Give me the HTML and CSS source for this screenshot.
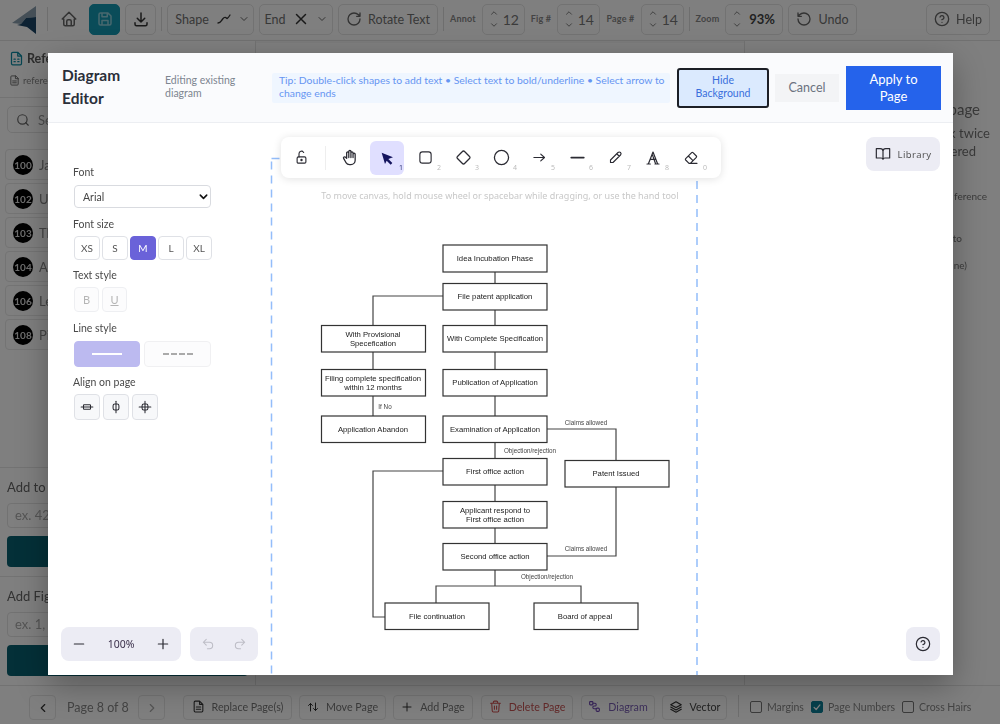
FILE: index.html
```html
<!DOCTYPE html>
<html lang="en">
<head>
<meta charset="utf-8">
<title>Diagram Editor</title>
<link rel="stylesheet" href="styles.css">
</head>
<body>
<div class="app">
  <header class="topbar">
    <svg class="logo" viewBox="0 0 25 28"><polygon class="logo-top" points="24,0 24,11 14,12 9,18 0,17"/><polygon class="logo-low" points="24,11 24,28 15,21 5,19 9,18 14,12"/></svg>
    <span class="sep sep-logo"></span>
    <button class="tb plain b-icon"><svg class="ic i18" viewBox="0 0 24 24"><path d="M5 12H3l9-9 9 9h-2M5 12v7a2 2 0 0 0 2 2h10a2 2 0 0 0 2-2v-7M9 21v-6a2 2 0 0 1 2-2h2a2 2 0 0 1 2 2v6"/></svg></button>
    <button class="tb save b-icon"><svg class="ic i18 ic-light" viewBox="0 0 24 24"><path d="M6 4h10l4 4v10a2 2 0 0 1-2 2H6a2 2 0 0 1-2-2V6a2 2 0 0 1 2-2zM8 4v5h7V4M8 20v-6h8v6"/></svg></button>
    <button class="tb b-icon"><svg class="ic i18 ic-dark" viewBox="0 0 24 24"><path d="M4 17v2a2 2 0 0 0 2 2h12a2 2 0 0 0 2-2v-2M7 11l5 5 5-5M12 4v12"/></svg></button>
    <span class="sep"></span>
    <button class="tb b-shape"><span class="shape-word">Shape</span><svg class="ic i16 ic-dark" viewBox="0 0 24 24"><path d="M3 18c4 0 4-2 7-6s5-2 6-1 3-2 5-5"/></svg><svg class="ic i12" viewBox="0 0 24 24"><path d="M6 9l6 6 6-6"/></svg></button>
    <button class="tb b-end">End <svg class="ic i18 ic-dark" viewBox="0 0 24 24"><path d="M18 6L6 18M6 6l12 12"/></svg><svg class="ic i12" viewBox="0 0 24 24"><path d="M6 9l6 6 6-6"/></svg></button>
    <button class="tb b-rotate"><svg class="ic i16" viewBox="0 0 24 24"><path d="M21 12a9 9 0 1 1-9-9c2.520 0 4.930 1 6.740 2.740L21 8M21 3v5h-5"/></svg>Rotate Text</button>
    <span class="sep"></span>
    <span class="lab w-annot">Annot</span>
    <div class="stepper w-step"><span class="arrows"><svg class="ic i10" viewBox="0 0 24 24"><path d="M6 15l6-6 6 6"/></svg><svg class="ic i10" viewBox="0 0 24 24"><path d="M6 9l6 6 6-6"/></svg></span><span>12</span></div>
    <span class="lab w-fig">Fig #</span>
    <div class="stepper w-step"><span class="arrows"><svg class="ic i10" viewBox="0 0 24 24"><path d="M6 15l6-6 6 6"/></svg><svg class="ic i10" viewBox="0 0 24 24"><path d="M6 9l6 6 6-6"/></svg></span><span>14</span></div>
    <span class="lab w-page">Page #</span>
    <div class="stepper w-step"><span class="arrows"><svg class="ic i10" viewBox="0 0 24 24"><path d="M6 15l6-6 6 6"/></svg><svg class="ic i10" viewBox="0 0 24 24"><path d="M6 9l6 6 6-6"/></svg></span><span>14</span></div>
    <span class="sep"></span>
    <span class="lab w-zoom">Zoom</span>
    <div class="stepper w-zoomstep"><span class="arrows"><svg class="ic i10" viewBox="0 0 24 24"><path d="M6 15l6-6 6 6"/></svg><svg class="ic i10" viewBox="0 0 24 24"><path d="M6 9l6 6 6-6"/></svg></span><span class="strong">93%</span></div>
    <button class="tb b-undo"><svg class="ic i16" viewBox="0 0 24 24"><path d="M3 12a9 9 0 1 0 9-9 9.750 9.750 0 0 0-6.740 2.740L3 8M3 3v5h5"/></svg>Undo</button>
    <button class="tb b-help"><svg class="ic i16" viewBox="0 0 24 24"><circle cx="12" cy="12" r="10"/><path d="M9.090 9a3 3 0 0 1 5.830 1c0 2-3 3-3 3M12 17h.01"/></svg>Help</button>
  </header>

  <div class="workspace">
    <aside class="leftcol">
      <div class="doc-head">
        <div class="doc-title"><svg class="ic i15 ic-teal" viewBox="0 0 24 24"><path d="M14 2H6a2 2 0 0 0-2 2v16a2 2 0 0 0 2 2h12a2 2 0 0 0 2-2V8zM14 2v6h6M8 13h2M14 13h2M8 17h2M14 17h2"/></svg><span>Reference Numerals</span></div>
        <div class="doc-file"><svg class="ic i11" viewBox="0 0 24 24"><path d="M14 2H6a2 2 0 0 0-2 2v16a2 2 0 0 0 2 2h12a2 2 0 0 0 2-2V8zM14 2v6h6M16 13H8M16 17H8"/></svg><span>reference</span></div>
      </div>
      <div class="search"><svg class="ic i14" viewBox="0 0 24 24"><circle cx="11" cy="11" r="8"/><path d="M21 21l-4.350-4.350"/></svg><span>Search</span></div>
      <ul class="nums">
        <li><b>100</b><span>Ja</span></li>
        <li><b>102</b><span>Up</span></li>
        <li><b>103</b><span>Th</span></li>
        <li><b>104</b><span>Ad</span></li>
        <li><b>106</b><span>Le</span></li>
        <li><b>108</b><span>Pi</span></li>
      </ul>
      <section class="adder">
        <div class="adder-label">Add to</div>
        <div class="adder-input">ex. 42</div>
        <div class="adder-btn"></div>
      </section>
      <section class="adder">
        <div class="adder-label">Add Fig</div>
        <div class="adder-input">ex. 1,</div>
        <div class="adder-btn"></div>
      </section>
    </aside>
    <main class="centercol"><div class="pagebox"></div></main>
    <aside class="rightcol">
      <span class="r-a">page</span>
      <span class="r-b">k twice</span>
      <span class="r-c">ered</span>
      <span class="r-d">ference</span>
      <span class="r-e">to</span>
      <span class="r-f">ne)</span>
    </aside>
  </div>

  <footer class="footbar">
    <button class="fb f-prev"><svg class="ic i14 ic-dark" viewBox="0 0 24 24"><path d="M15 6l-6 6 6 6"/></svg></button>
    <span class="pageno">Page 8 of 8</span>
    <button class="fb f-next"><svg class="ic i14 ic-mute" viewBox="0 0 24 24"><path d="M9 6l6 6-6 6"/></svg></button>
    <button class="fb f-replace"><svg class="ic i13 ic-dark" viewBox="0 0 24 24"><path d="M14 2H6a2 2 0 0 0-2 2v16a2 2 0 0 0 2 2h12a2 2 0 0 0 2-2V8zM14 2v6h6M16 13H8M16 17H8"/></svg>Replace Page(s)</button>
    <button class="fb f-move"><svg class="ic i12 ic-dark" viewBox="0 0 24 24"><path d="M7 20V5M3 9l4-4 4 4M17 4v15M13 15l4 4 4-4"/></svg>Move Page</button>
    <button class="fb f-add"><svg class="ic i12 ic-dark" viewBox="0 0 24 24"><path d="M12 4v16M4 12h16"/></svg>Add Page</button>
    <button class="fb f-del"><svg class="ic i13 ic-red" viewBox="0 0 24 24"><path d="M3 6h18M8 6V4a2 2 0 0 1 2-2h4a2 2 0 0 1 2 2v2M19 6l-1 14a2 2 0 0 1-2 2H8a2 2 0 0 1-2-2L5 6M10 11v6M14 11v6"/></svg>Delete Page</button>
    <button class="fb f-diag"><svg class="ic i13 ic-purple" viewBox="0 0 24 24"><rect x="3" y="3" width="6" height="6" rx="1"/><rect x="15" y="15" width="6" height="6" rx="2"/><path d="M9 6h4a2 2 0 0 1 2 2v1a2 2 0 0 1-2 2h-2a2 2 0 0 0-2 2v1a2 2 0 0 0 2 2h4"/></svg>Diagram</button>
    <button class="fb f-vec"><svg class="ic i14 ic-dark" viewBox="0 0 24 24"><path d="M12 3L3 8l9 5 9-5zM3 12l9 5 9-5M3 16l9 5 9-5"/></svg>Vector</button>
    <span class="sep sep-foot"></span>
    <label class="cb"><i></i>Margins</label>
    <label class="cb"><i class="on"><svg class="ic ic-white" viewBox="0 0 24 24"><path d="M5 13l5 5 9-11"/></svg></i>Page Numbers</label>
    <label class="cb"><i></i>Cross Hairs</label>
  </footer>

  <div class="overlay"></div>

  <div class="modal">
    <div class="m-head">
      <h1>Diagram Editor</h1>
      <p class="m-sub">Editing existing diagram</p>
      <p class="m-tip">Tip: Double-click shapes to add text • Select text to bold/underline • Select arrow to change ends</p>
      <button class="m-hide">Hide Background</button>
      <button class="m-cancel">Cancel</button>
      <button class="m-apply">Apply to Page</button>
    </div>
    <div class="m-body">
      <div class="props">
        <div class="p-label">Font</div>
        <div class="p-select"><span>Arial</span><svg class="ic i11 ic-chev" viewBox="0 0 24 24"><path d="M5 9l7 7 7-7"/></svg></div>
        <div class="p-label p-size">Font size</div>
        <div class="p-row">
          <button class="sz">XS</button><button class="sz">S</button><button class="sz sz-on">M</button><button class="sz">L</button><button class="sz">XL</button>
        </div>
        <div class="p-label p-ts">Text style</div>
        <div class="p-row p-wide">
          <button class="ts">B</button><button class="ts ts-u">U</button>
        </div>
        <div class="p-label p-ls">Line style</div>
        <div class="p-row p-tiny">
          <button class="ln ln-on"><span class="ln-solid"></span></button><button class="ln"><span class="ln-dash"></span></button>
        </div>
        <div class="p-label p-al">Align on page</div>
        <div class="p-row p-wide">
          <button class="al"><svg class="ic i14 ic-black" viewBox="0 0 24 24"><path d="M2 12h20"/><rect x="6" y="8" width="12" height="8" rx="1"/></svg></button>
          <button class="al"><svg class="ic i14 ic-black" viewBox="0 0 24 24"><path d="M12 2v20"/><rect x="7" y="7" width="10" height="10" rx="3"/></svg></button>
          <button class="al"><svg class="ic i14 ic-black" viewBox="0 0 24 24"><path d="M12 2v20M2 12h20"/><rect x="7" y="7" width="10" height="10" rx="3"/></svg></button>
        </div>
      </div>

      <svg class="sheet" viewBox="48 123 905 552">
        <rect class="page-edge" x="271.500" y="158.500" width="425.500" height="560"/>
        <g class="conn">
          <path d="M495 272V283M495 310V325M495 352V369M495 396V416M495 442V458M495 485V501M495 528V543M495 570V586"/>
          <path d="M443 296H373V325M373 352V369M373 396V416"/>
          <path d="M547 429H616V460M616 487V556H547"/>
          <path d="M443 471H373V617H385M436 603V586H581V603"/>
        </g>
        <g class="box">
          <rect x="443" y="245" width="104" height="27"/><rect x="443" y="283.500" width="104" height="26.500"/>
          <rect x="321.500" y="325.500" width="104" height="26.500"/><rect x="443" y="325.500" width="104" height="26.500"/>
          <rect x="321.500" y="369.500" width="104" height="26.500"/><rect x="443" y="369.500" width="104" height="26.500"/>
          <rect x="321.500" y="416" width="104" height="26.500"/><rect x="443" y="416" width="104" height="26.500"/>
          <rect x="443" y="458.500" width="104" height="26.500"/><rect x="565" y="460.500" width="104" height="26.500"/>
          <rect x="443" y="501.500" width="104" height="26.500"/><rect x="443" y="543.500" width="104" height="26.500"/>
          <rect x="385" y="603" width="104" height="26.500"/><rect x="534" y="603" width="104" height="26.500"/>
        </g>
        <g class="node-text">
          <text x="495" y="261">Idea Incubation Phase</text>
          <text x="495" y="299">File patent application</text>
          <text x="373" y="337">With Provisional</text><text x="373" y="346">Specefication</text>
          <text x="495" y="341">With Complete Specification</text>
          <text x="373" y="381">Filing complete specification</text><text x="373" y="389.500">within 12 months</text>
          <text x="495" y="385">Publication of Application</text>
          <text x="373" y="431.500">Application Abandon</text>
          <text x="495" y="431.500">Examination of Application</text>
          <text x="495" y="474">First office action</text>
          <text x="616" y="476">Patent Issued</text>
          <text x="495" y="513">Applicant respond to</text><text x="495" y="522">First office action</text>
          <text x="495" y="559">Second office action</text>
          <text x="437" y="619">File continuation</text>
          <text x="585" y="619">Board of appeal</text>
        </g>
        <g class="edge-text">
          <text x="385" y="409">If No</text>
          <text x="586" y="425">Claims allowed</text>
          <text x="530" y="453">Objection/rejection</text>
          <text x="586" y="551">Claims allowed</text>
          <text x="547" y="579">Objection/rejection</text>
        </g>
      </svg>

      <p class="hint">To move canvas, hold mouse wheel or spacebar while dragging, or use the hand tool</p>

      <div class="tools">
        <button class="tool"><svg class="ic i15 ic-black" viewBox="0 0 24 24"><rect x="5" y="11" width="14" height="10" rx="2"/><circle cx="12" cy="16" r="1"/><path d="M8 11V6a4 4 0 0 1 7.500-2"/></svg></button>
        <span class="tool-sep"></span>
        <button class="tool t-hand"><svg class="ic i17 ic-black" viewBox="0 0 24 24"><path d="M8 13V5.500a1.500 1.500 0 0 1 3 0V12M11 5.500v-2a1.500 1.500 0 1 1 3 0V12M14 5.500a1.500 1.500 0 0 1 3 0V12M17 7.500a1.500 1.500 0 0 1 3 0V16a6 6 0 0 1-6 6h-2a6 6 0 0 1-5-2.700L7 19c-.3-.5-1.400-2.400-3.300-5.700a1.500 1.500 0 0 1 .5-2 1.900 1.900 0 0 1 2.300.3L8 13"/></svg></button>
        <button class="tool tool-on"><svg class="i16" viewBox="0 0 24 24"><path class="ptr" d="M4 4l17 7-7 2.500 6 6-2.500 2.500-6-6L9 21z"/></svg><sub class="navy">1</sub></button>
        <button class="tool"><svg class="ic i15 ic-black" viewBox="0 0 24 24"><rect x="3" y="3" width="18" height="18" rx="4"/></svg><sub>2</sub></button>
        <button class="tool"><svg class="ic i17 ic-black" viewBox="0 0 24 24"><path d="M10.500 3.500a2 2 0 0 1 3 0l7 7a2 2 0 0 1 0 3l-7 7a2 2 0 0 1-3 0l-7-7a2 2 0 0 1 0-3z"/></svg><sub>3</sub></button>
        <button class="tool"><svg class="ic i17 ic-black" viewBox="0 0 24 24"><circle cx="12" cy="12" r="10"/></svg><sub>4</sub></button>
        <button class="tool"><svg class="ic i15 ic-black" viewBox="0 0 24 24"><path d="M3 12h17M14 6.500l6 5.500-6 5.500"/></svg><sub>5</sub></button>
        <button class="tool"><svg class="ic i15 ic-thick" viewBox="0 0 24 24"><path d="M2 12h20"/></svg><sub>6</sub></button>
        <button class="tool"><svg class="ic i15 ic-black" viewBox="0 0 24 24"><path d="M4 20h4L20 8a2.800 2.800 0 0 0-4-4L4 16v4M14 6l4 4"/></svg><sub>7</sub></button>
        <button class="tool"><svg class="ic i16 ic-black" viewBox="0 0 24 24"><path d="M3 21h5M15 21h6M5 21L12 3l7 18M8 14h8M11 7l5 14"/></svg><sub>8</sub></button>
        <button class="tool"><svg class="ic i16 ic-black" viewBox="0 0 24 24"><path d="M21 20H9l-5-5a1.500 1.500 0 0 1 0-2l9-9a1.500 1.500 0 0 1 2 0l5 5a1.500 1.500 0 0 1 0 2L11 20M8 9l7 7"/></svg><sub>0</sub></button>
      </div>

      <button class="library"><svg class="ic i16 ic-black" viewBox="0 0 24 24"><path d="M2 4h6a4 4 0 0 1 4 4v12a3 3 0 0 0-3-2H2zM22 4h-6a4 4 0 0 0-4 4v12a3 3 0 0 1 3-2h7z"/></svg>Library</button>

      <div class="zoomer">
        <svg class="ic i16 ic-black" viewBox="0 0 24 24"><path d="M5 12h14"/></svg>
        <span>100%</span>
        <svg class="ic i16 ic-black" viewBox="0 0 24 24"><path d="M12 5v14M5 12h14"/></svg>
      </div>
      <div class="history">
        <svg class="ic i14 ic-soft" viewBox="0 0 24 24"><path d="M9 14L4 9l5-5M4 9h10.500a5.500 5.500 0 0 1 0 11H11"/></svg>
        <svg class="ic i14 ic-soft" viewBox="0 0 24 24"><path d="M15 14l5-5-5-5M20 9H9.500a5.500 5.500 0 0 0 0 11H13"/></svg>
      </div>
      <button class="m-help"><svg class="ic i16 ic-black" viewBox="0 0 24 24"><circle cx="12" cy="12" r="10"/><path d="M9.090 9a3 3 0 0 1 5.830 1c0 2-3 3-3 3M12 17h.01"/></svg></button>
    </div>
  </div>
</div>
</body>
</html>
```

FILE: styles.css
```css
* { box-sizing: border-box; }
html, body { margin: 0; padding: 0; }
body { font-family: "Lato", "Open Sans", sans-serif; color: #666; background: #fff; }
button { font: inherit; color: inherit; background: none; }
p, h1, ul { margin: 0; padding: 0; }
.app { position: relative; width: 1000px; height: 724px; overflow: hidden; display: flex; flex-direction: column; opacity: .999; }

.ic { fill: none; stroke: #666; stroke-width: 2; stroke-linecap: round; stroke-linejoin: round; flex: none; display: block; }
.i10 { width: 10px; height: 10px; } .i11 { width: 11px; height: 11px; } .i12 { width: 12px; height: 12px; }
.i13 { width: 13px; height: 13px; } .i14 { width: 14px; height: 14px; } .i15 { width: 15px; height: 15px; }
.i16 { width: 16px; height: 16px; } .i17 { width: 17px; height: 17px; } .i18 { width: 18px; height: 18px; }
.ic-dark { stroke: #333; } .ic-light { stroke: #8fd0dd; } .ic-teal { stroke: #0d8ba3; } .ic-mute { stroke: #aaa; }
.ic-red { stroke: #d05050; } .ic-purple { stroke: #6d45b0; } .ic-white { stroke: #fff; stroke-width: 3; }
.ic-black { stroke: #2b2b33; stroke-width: 1.800; } .ic-soft { stroke: #bdbdc6; stroke-width: 1.800; } .ic-thick { stroke: #2b2b33; stroke-width: 2.800; }
.ic-chev { stroke: #111; stroke-width: 3.400; }

.topbar { height: 41px; flex: none; display: flex; align-items: flex-start; gap: 5px; padding: 4px 10px 0 12px; border-bottom: 1px solid #e2e2e2; background: #fff; }
.logo { width: 25px; height: 28px; margin-top: 2px; flex: none; }
.logo-top { fill: #8a9fae; } .logo-low { fill: #1b4566; }
.sep { width: 1px; height: 24px; margin-top: 3px; background: #ddd; flex: none; }
.sep-logo { margin-left: 5px; }
.tb { height: 31px; border: 1px solid #e4e4e4; border-radius: 5px; display: flex; align-items: center; justify-content: center; gap: 6px; font-size: 12.500px; padding: 0 0 1px; flex: none; color: #707070; }
.tb.plain { border-color: transparent; }
.save { background: #1498b2; border-color: #1498b2; }
.b-icon { width: 31px; }
.b-shape { width: 87px; padding-left: 4px; } .b-end { width: 74px; } .b-rotate { width: 100px; } .b-undo { width: 69px; }
.shape-word { margin-right: 1px; }
.b-help { width: 64px; margin-left: auto; }
.lab { font-size: 9px; color: #888; line-height: 30px; flex: none; text-align: center; font-weight: 700; letter-spacing: .2px; }
.w-annot { width: 28px; } .w-fig { width: 22px; } .w-page { width: 31px; } .w-zoom { width: 25px; }
.stepper { height: 31px; border: 1px solid #e4e4e4; border-radius: 5px; display: flex; align-items: center; justify-content: space-between; padding: 0 5px 1px 6px; font-size: 14px; flex: none; color: #777; }
.w-step { width: 43px; } .w-zoomstep { width: 58px; padding-right: 7px; }
.arrows { display: flex; flex-direction: column; gap: 2px; }
.strong { color: #444; font-weight: 700; font-size: 13px; }

.workspace { flex: 1; min-height: 0; display: flex; }
.leftcol { width: 256px; flex: none; display: flex; flex-direction: column; background: #fff; border-right: 1px solid #e4e4e4; }
.doc-head { height: 57px; flex: none; padding: 10px 9px 0; border-bottom: 1px solid #e6e6e6; }
.doc-title { display: flex; gap: 3px; align-items: center; font-size: 12.500px; font-weight: 700; color: #5a5a5a; white-space: nowrap; }
.doc-file { display: flex; gap: 3px; align-items: center; font-size: 9.500px; color: #888; margin-top: 9px; }
.search { margin: 8px 7px 0; height: 27px; border: 1px solid #e4e4e4; border-radius: 5px; display: flex; align-items: center; gap: 8px; padding-left: 8px; font-size: 13px; color: #999; }
.nums { list-style: none; flex: 1; margin-top: 16px; padding: 0 5px; display: flex; flex-direction: column; gap: 3px; }
.nums li { height: 31px; border: 1px solid #e8e8e8; border-radius: 4px; display: flex; align-items: center; gap: 6px; padding-left: 7px; font-size: 13px; color: #888; }
.nums b { width: 20px; height: 20px; border-radius: 50%; background: #000; color: #ddd; font-size: 10px; display: flex; align-items: center; justify-content: center; flex: none; }
.adder { height: 109px; flex: none; border-top: 1px solid #e6e6e6; padding: 11px 7px 0; }
.adder-label { font-size: 13px; color: #666; line-height: 17px; }
.adder-input { height: 25px; margin-top: 7px; border: 1px solid #e4e4e4; border-radius: 4px; padding-left: 7px; font-size: 13px; line-height: 23px; color: #aaa; }
.adder-btn { height: 31px; margin-top: 8px; border-radius: 4px; background: #086070; }

.centercol { flex: 1; background: #f6f6f6; padding: 2px 0 0; }
.pagebox { height: 100%; background: #fff; }
.rightcol { width: 256px; flex: none; background: #fff; border-left: 1px solid #e4e4e4; display: flex; flex-direction: column; align-items: flex-end; color: #777; }
.rightcol span { display: block; }
.r-a { font-size: 15px; line-height: 20px; margin: 58px 20px 0 0; }
.r-b { font-size: 13px; line-height: 18px; margin: 5px 10px 0 0; }
.r-c { font-size: 13px; line-height: 18px; margin: 0 24px 0 0; }
.r-d { font-size: 10px; line-height: 14px; margin: 29px 13px 0 0; }
.r-e { font-size: 10px; line-height: 14px; margin: 28px 38px 0 0; }
.r-f { font-size: 10px; line-height: 14px; margin: 13px 33px 0 0; }

.footbar { height: 39px; flex: none; display: flex; align-items: flex-start; gap: 7px; padding: 9px 0 0 29px; border-top: 1px solid #e4e4e4; background: #fff; font-size: 11px; color: #777; }
.fb { height: 25px; border: 1px solid #e6e6e6; border-radius: 4px; padding: 0 0 2px; display: flex; align-items: center; justify-content: center; gap: 7px; flex: none; font-size: 10.700px; }
.f-prev, .f-next { width: 27px; padding: 0; }
.f-prev { margin-right: 4px; } .f-next { margin-left: 3px; margin-right: 11px; }
.pageno { font-size: 12.500px; line-height: 26px; width: 61px; white-space: nowrap; color: #888; }
.f-replace { width: 109px; } .f-move { width: 87px; } .f-add { width: 80px; } .f-del { width: 92px; margin-left: 1px; color: #c85555; }
.f-diag { width: 74px; margin-left: 1px; color: #7a5fb5; } .f-vec { width: 65px; color: #444; }
.sep-foot { margin: 0 4px; height: 22px; }
.cb { display: flex; align-items: center; gap: 5px; height: 24px; font-size: 10.500px; color: #888; }
.cb i { width: 12px; height: 12px; border: 1px solid #777; border-radius: 2px; flex: none; display: block; }
.cb i.on { background: #0c7f96; border-color: #0c7f96; }
.cb i.on svg { width: 10px; height: 10px; }

.overlay { position: absolute; inset: 0; background: rgba(0, 0, 0, .5); }

.modal { position: absolute; left: 48px; top: 53px; width: 905px; height: 622px; background: #fff; display: flex; flex-direction: column; box-shadow: 0 10px 30px rgba(0, 0, 0, .3); color: #444; }
.m-head { height: 70px; flex: none; display: flex; align-items: center; background: #fafbfd; border-bottom: 1px solid #eceef2; padding: 0 12px 0 14px; }
h1 { font-size: 15.500px; font-weight: 700; line-height: 23px; width: 103px; flex: none; color: #2a2f3a; margin-bottom: 2px; }
.m-sub { width: 107px; flex: none; font-size: 10.500px; line-height: 13px; color: #7d8590; padding-right: 30px; margin-bottom: 2px; }
.m-tip { width: 398px; flex: none; padding: 1px 0 2px 7px; background: #eff6ff; font-size: 10.400px; line-height: 13px; color: #6695f2; height: 30px; border-radius: 2px; }
.m-hide { width: 92px; height: 40px; margin-left: 7px; flex: none; border: 2px solid #1c1f26; border-radius: 3px; background: #dbeafe; color: #3a6fdc; font-size: 10.500px; line-height: 13px; padding: 0 10px 1px; }
.m-cancel { width: 64px; height: 28px; margin-left: 6px; flex: none; border: 0; background: #f3f4f6; color: #6b7280; font-size: 12.500px; padding: 0; }
.m-apply { width: 95px; height: 44px; margin-left: 7px; flex: none; border: 0; background: #2563eb; color: #fff; font-size: 13px; line-height: 17px; padding: 0 14px; }

.m-body { position: relative; flex: 1; min-height: 0; }
.props { width: 163px; padding: 42px 0 0 26px; position: relative; }
.p-label { font-size: 10.500px; line-height: 14px; color: #4a4a4a; margin-left: -1px; }
.p-size { margin-top: 9px; } .p-ts { margin-top: 8px; } .p-ls { margin-top: 9px; } .p-al { margin-top: 8px; }
.p-select { width: 137px; height: 23px; margin-top: 6px; border: 1px solid #d9dbe0; border-radius: 4px; display: flex; align-items: center; justify-content: space-between; padding: 0 1px 0 8px; font-size: 10.500px; color: #444; }
.p-row { display: flex; gap: 2px; margin-top: 5px; }
.p-wide { gap: 3px; } .p-tiny { gap: 4px; margin-top: 6px; }
.sz, .ts, .al { border: 1px solid #dfe1e6; border-radius: 4px; padding: 0; flex: none; display: flex; align-items: center; justify-content: center; font-size: 10px; background: #fff; color: #555; }
.sz { width: 26px; height: 24px; }
.sz-on { background: #6a62d9; border-color: #6a62d9; color: #fff; }
.ts { width: 25px; height: 25px; color: #b5b5b5; border-color: #eeeff2; font-size: 11px; background: #fcfcfd; }
.ts-u { text-decoration: underline; }
.al { width: 26px; height: 26px; background: #f7f8fa; }
.ln { width: 67px; height: 26px; border: 1px solid #f0f0f2; border-radius: 4px; padding: 0; flex: none; display: flex; align-items: center; justify-content: center; background: #fcfcfd; }
.ln-on { width: 66px; background: #bcbaf0; border-color: #bcbaf0; }
.ln-solid { width: 30px; border-top: 2px solid #fff; }
.ln-dash { width: 30px; border-top: 2px dashed #aaa; }

.sheet { position: absolute; inset: 0; width: 905px; height: 552px; }
.page-edge { fill: none; stroke: #93bdfa; stroke-width: 1.500; stroke-dasharray: 8 6; }
.conn path { fill: none; stroke: #444; stroke-width: 1.200; }
.box rect { fill: #fff; stroke: #333; stroke-width: 1.200; }
.node-text text { font-family: "Liberation Sans", Arial, sans-serif; font-size: 7.700px; fill: #1a1a1a; text-anchor: middle; }
.edge-text text { font-family: "Liberation Sans", Arial, sans-serif; font-size: 6.300px; fill: #444; text-anchor: middle; }

.hint { position: absolute; left: 233px; top: 66px; width: 438px; text-align: center; font-family: "Noto Sans", sans-serif; font-size: 9px; line-height: 14px; color: #c8c8c8; white-space: nowrap; }

.tools { position: absolute; left: 233px; top: 14px; width: 440px; height: 41px; background: #fff; border-radius: 8px; box-shadow: 0 1px 8px rgba(0, 0, 0, .12); display: flex; align-items: center; padding: 0 0 0 3px; }
.tool { position: relative; width: 34px; height: 34px; padding: 0; border: 0; border-radius: 6px; display: flex; align-items: center; justify-content: center; flex: none; margin-right: 4px; background: none; }
.tool-on { background: #e0dfff; }
.tool-sep { width: 1px; height: 24px; background: #eee; margin: 0 6px 0 3px; flex: none; }
.tool sub { position: absolute; right: 1px; bottom: 3px; font-size: 7px; line-height: 8px; color: #bbb; font-family: "Noto Sans", sans-serif; }
.tool sub.navy { color: #333a7a; }
.ptr { fill: #14145e; }

.library { position: absolute; right: 13px; top: 14px; width: 74px; height: 34px; border: 0; border-radius: 8px; background: #ececf4; display: flex; align-items: center; justify-content: center; gap: 7px; padding: 0; font-family: "Noto Sans", sans-serif; font-size: 9.500px; letter-spacing: .4px; color: #555; }
.zoomer { position: absolute; left: 13px; bottom: 14px; width: 120px; height: 34px; border-radius: 8px; background: #ececf4; display: flex; align-items: center; justify-content: space-between; padding: 0 10px; font-family: "Noto Sans", sans-serif; font-size: 10.500px; color: #3a2f4a; }
.history { position: absolute; left: 142px; bottom: 14px; width: 68px; height: 34px; border-radius: 8px; background: #ececf4; display: flex; align-items: center; justify-content: space-between; padding: 0 11px 0 11px; }
.m-help { position: absolute; right: 13px; bottom: 14px; width: 34px; height: 34px; border: 0; border-radius: 8px; background: #ececf4; display: flex; align-items: center; justify-content: center; padding: 0; }
```
